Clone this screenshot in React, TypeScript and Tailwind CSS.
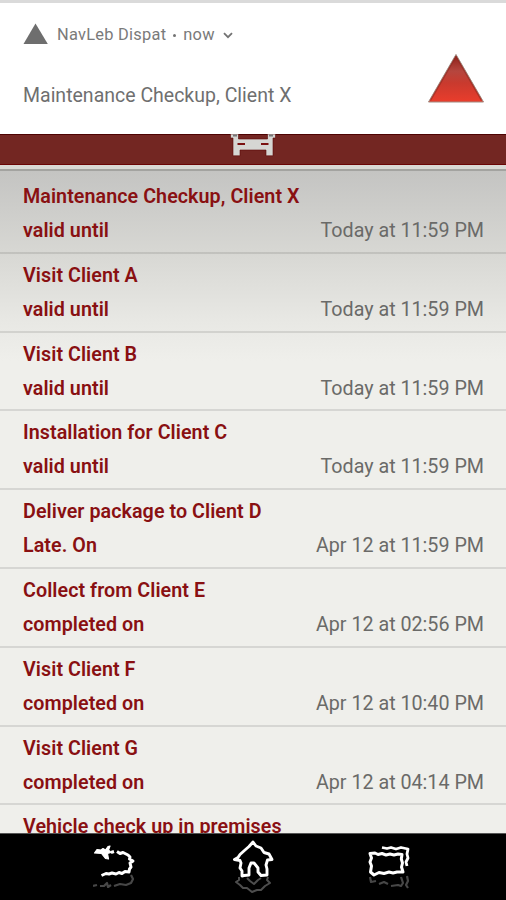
import React from 'react';

interface Task {
  title: string;
  status: string;
  date: string;
}

const tasks: Task[] = [
  { title: 'Maintenance Checkup, Client X', status: 'valid until', date: 'Today at 11:59 PM' },
  { title: 'Visit Client A', status: 'valid until', date: 'Today at 11:59 PM' },
  { title: 'Visit Client B', status: 'valid until', date: 'Today at 11:59 PM' },
  { title: 'Installation for Client C', status: 'valid until', date: 'Today at 11:59 PM' },
  { title: 'Deliver package to Client D', status: 'Late. On', date: 'Apr 12 at 11:59 PM' },
  { title: 'Collect from Client E', status: 'completed on', date: 'Apr 12 at 02:56 PM' },
  { title: 'Visit Client F', status: 'completed on', date: 'Apr 12 at 10:40 PM' },
  { title: 'Visit Client G', status: 'completed on', date: 'Apr 12 at 04:14 PM' },
];

const Notification: React.FC = () => (
  <div className="h-[134px] shrink-0 border-t-[3px] border-[#dadada] bg-white flex justify-between pl-[23px] pr-[21px]">
    <div className="flex flex-col">
      <div className="mt-5 h-6 flex items-center text-[16.4px] text-[#7a7a7a]">
        <svg className="w-[26px] h-[22px] mr-2 -mt-[3px]" viewBox="0 0 26 22">
          <path d="M12.5 0.5 L24.8 21 H0.5 Z" fill="#6e6e6e" />
        </svg>
        <span className="tracking-[0.26px]">NavLeb Dispat</span>
        <span className="ml-[7px] mr-[5px] w-[3px] h-[3px] rounded-full bg-[#737373]" />
        <span className="ml-[2px] tracking-[0.28px]">now</span>
        <svg className="w-[10px] h-[7px] ml-2" viewBox="0 0 10 7">
          <path d="M1 1.2 L5 5.2 L9 1.2" fill="none" stroke="#737373" strokeWidth="1.8" />
        </svg>
      </div>
      <div className="mt-[35px] h-7 leading-7 text-[19.5px] text-[#6f6f6f] whitespace-nowrap">
        Maintenance Checkup, Client X
      </div>
    </div>

    <svg className="w-[58px] h-[50px] mt-[50px]" viewBox="0 0 58 50">
      <defs>
        <linearGradient id="alert" x1="0" y1="0" x2="0" y2="1">
          <stop offset="0" stopColor="#8c1f18" />
          <stop offset="0.35" stopColor="#b5463e" />
          <stop offset="0.6" stopColor="#c93a2e" />
          <stop offset="1" stopColor="#ea3d2c" />
        </linearGradient>
      </defs>
      <path d="M29 1.5 L56.5 49 H1.5 Z" fill="url(#alert)" stroke="#a08a80" strokeWidth="1" />
      <path d="M29 3.5 L3.5 47.5" stroke="#8f2a22" strokeWidth="1.4" opacity="0.6" />
      <path d="M29 3.5 L54.5 47.5" stroke="#8f2a22" strokeWidth="1.4" opacity="0.6" />
    </svg>
  </div>
);

const Header: React.FC = () => (
  <div className="shrink-0">
    <div className="h-[31px] border-t border-b border-t-[#4d0303] border-b-[#6a0505] bg-[#732622] flex justify-center">
      {/* Bottom half of the car, the rest is under the notification */}
      <svg className="w-[48px] h-[24px] -mt-px" viewBox="0 0 48 24">
        <path
          d="M1.5 0 H9.5 V5 H38.5 V0 H46.5 V4 H44 V21.8 H37 V16 H11 V21.8 H4 V4 H1.5 Z"
          fill="#d6d6d3"
          stroke="#5c0808"
          strokeWidth="0.6"
        />
        <path d="M8.5 10 H16 M32 10 H39.5" stroke="#7a1010" strokeWidth="2" />
        <path d="M4 1.5 H8 M40 1.5 H44" stroke="#777777" strokeWidth="2" />
      </svg>
    </div>
    <div className="h-[4px] bg-[#d9d9d5]" />
    <div className="h-[2px] bg-[#a3a3a0]" />
  </div>
);

const TaskRow: React.FC<{ task: Task }> = ({ task }) => (
  <div className="h-[78.8px] shrink-0 pt-[5px] pl-[23px] pr-[22px] border-b-2 border-black/10 text-[19.7px] leading-[34px] whitespace-nowrap">
    <div className="font-semibold tracking-[0.06px] text-[#891012]">{task.title}</div>
    <div className="flex justify-between">
      <span className="font-semibold tracking-[0.06px] text-[#891012]">{task.status}</span>
      <span className="text-[#6a6a68]">{task.date}</span>
    </div>
  </div>
);

const BackIcon: React.FC = () => (
  <svg className="w-[46px] h-[56px]" viewBox="0 0 46 56" fill="none" stroke="white" strokeLinejoin="round">
    <path
      d="M1.5 15 L4 11.5 L8 12 L10 10.5 L12.5 12 L15 8.5 L17 8 L15.5 12 L18 14.5 L14.5 15.5 L15.5 21 L12.5 20.5 L8.5 15.5 Z"
      fill="white"
      strokeWidth="1.2"
    />
    <path
      d="M18 14.5 L21 13.5 M24 13.5 L27 15.5 L30 14.5 L35 17 L37 19 L36.5 21 L40 23 L37 25 L38 29 L36.5 31 L36 34 L32 33.5 L29 35.5 L26 34.5 L23 36 L19 35 L16 36 L13 35.5 L8.5 37.5"
      strokeWidth="3"
    />
    <path
      d="M0 48 L4 47 M7 48 L11 48 L14 45 L15 49 L18 47 M21 48 L27 46 L33 47 L38 45 L40 41 L38 37"
      strokeWidth="2.2"
      opacity="0.28"
    />
  </svg>
);

const HomeIcon: React.FC = () => (
  <svg className="w-[46px] h-[56px]" viewBox="0 0 46 56" fill="none" stroke="white" strokeLinejoin="round">
    <path
      d="M23 4 L19 8.5 L15 12 L10 16.5 L8 19.5 L4.5 21.5 L10 22.5 L11 25 L10 30 L12 33 L12 38 L14 37.5 L19 37 L19 30 L21 25 L24 25 L28 30 L28 34 L31 37.5 L37 37 L37 31 L36 27 L37.5 22 L42 21.5 L39 16 L34 14.5 L31 10 L26 8 Z"
      strokeWidth="2.9"
    />
    <path
      d="M9 39 L9 42 L6 44 L10 47 L13 50 L17 50 L22 54 L27 52 L31 52 L35 48 L40 45 L37 42 L38 39 M17 40 L20 43 L24 46 L28 42 L31 40"
      strokeWidth="2"
      opacity="0.3"
    />
  </svg>
);

const RecentIcon: React.FC = () => (
  <svg className="w-[46px] h-[56px]" viewBox="0 0 46 56" fill="none" stroke="white" strokeLinejoin="round">
    <path
      d="M3 15.5 L8 15 L11 16.5 L15 15.5 L19 17 L23 16 L27 17 L31 16 L35 16.5 L34.3 21 L35.5 25 L34.5 29 L36 34 L30 34 L26 35 L22 34 L17 35.5 L12 34.5 L7 37 L3.5 34 L4.5 28 L3 24 L4.5 20 Z"
      strokeWidth="3"
    />
    <path d="M15 9.5 L20 10.5 L24 9.5 L29 11 L34 9.5 L41 11 L40 16 L41 20 L39 24 L40 28" strokeWidth="2.8" />
    <path
      d="M3 39 L4 44 L9 43 M12 46 L17 44 L21 46 M24 48 L31 47 L34 48 L36 45 L34 39 M40 38 L41 43 L39 47 L41 50"
      strokeWidth="2.2"
      opacity="0.28"
    />
  </svg>
);

export default function App() {
  return (
    <div className="w-[506px] h-[900px] overflow-hidden flex flex-col font-['Roboto',sans-serif] bg-[#efefeb]">
      <Notification />
      <Header />

      {/* Task list */}
      <div className="flex-1 min-h-0 overflow-hidden flex flex-col pt-[4.1px] bg-[linear-gradient(to_bottom,#c4c4c2_0px,#d7d7d3_80px,#e8e8e4_150px,#efefeb_190px)]">
        {tasks.map((task) => (
          <TaskRow key={task.title} task={task} />
        ))}
        <TaskRow task={{ title: 'Vehicle check up in premises', status: '', date: '' }} />
      </div>

      {/* System navigation */}
      <div className="h-[67px] shrink-0 bg-black border-t border-[#555555] flex justify-center gap-[91px] pt-[4px]">
        <BackIcon />
        <HomeIcon />
        <RecentIcon />
      </div>
    </div>
  );
}
